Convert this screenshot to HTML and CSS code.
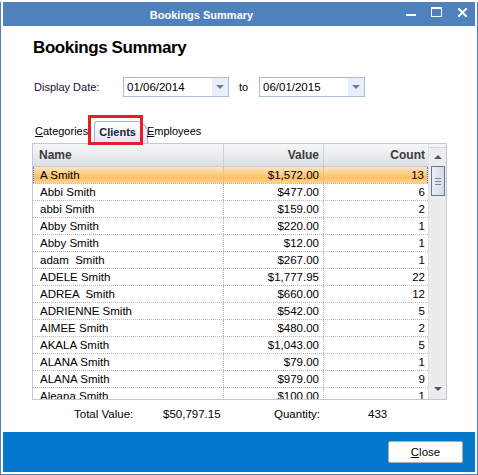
FILE: index.html
```html
<!DOCTYPE html>
<html lang="en">
<head>
  <meta charset="UTF-8" />
  <title>Bookings Summary</title>
  <link rel="stylesheet" href="styles.css">
</head>
<body>
  <div class="window">
    <div class="titlebar">
      <div class="title">Bookings Summary</div>
      <div class="win-controls">
        <span class="ctl-min"></span>
        <span class="ctl-max"></span>
        <svg class="ctl-close" width="9" height="9" viewBox="0 0 9 9">
          <path d="M1 1 L8 8 M8 1 L1 8" stroke="#fff" stroke-width="2" stroke-linecap="square" fill="none"/>
        </svg>
      </div>
    </div>

    <div class="content">
      <h1 class="heading">Bookings Summary</h1>

      <div class="date-row">
        <span class="date-label">Display Date:</span>
        <div class="date-box">
          <span class="date-value">01/06/2014</span>
          <span class="date-drop"><i class="tri-down"></i></span>
        </div>
        <span class="date-to">to</span>
        <div class="date-box">
          <span class="date-value">06/01/2015</span>
          <span class="date-drop"><i class="tri-down"></i></span>
        </div>
      </div>

      <div class="tabs">
        <span class="tab"><u>C</u>ategories</span>
        <span class="tab active">C<u>l</u>ients</span>
        <span class="tab next"><u>E</u>mployees</span>
        <div class="highlight-box"></div>
      </div>

      <div class="grid">
        <div class="grid-main">
          <div class="row head">
            <div class="cell name">Name</div>
            <div class="cell value">Value</div>
            <div class="cell count">Count</div>
          </div>
          <div class="rows">
            <div class="row selected"><div class="cell name">A Smith</div><div class="cell value">$1,572.00</div><div class="cell count">13</div></div>
            <div class="row"><div class="cell name">Abbi Smith</div><div class="cell value">$477.00</div><div class="cell count">6</div></div>
            <div class="row"><div class="cell name">abbi Smith</div><div class="cell value">$159.00</div><div class="cell count">2</div></div>
            <div class="row"><div class="cell name">Abby Smith</div><div class="cell value">$220.00</div><div class="cell count">1</div></div>
            <div class="row"><div class="cell name">Abby Smith</div><div class="cell value">$12.00</div><div class="cell count">1</div></div>
            <div class="row"><div class="cell name">adam  Smith</div><div class="cell value">$267.00</div><div class="cell count">1</div></div>
            <div class="row"><div class="cell name">ADELE Smith</div><div class="cell value">$1,777.95</div><div class="cell count">22</div></div>
            <div class="row"><div class="cell name">ADREA  Smith</div><div class="cell value">$660.00</div><div class="cell count">12</div></div>
            <div class="row"><div class="cell name">ADRIENNE Smith</div><div class="cell value">$542.00</div><div class="cell count">5</div></div>
            <div class="row"><div class="cell name">AIMEE Smith</div><div class="cell value">$480.00</div><div class="cell count">2</div></div>
            <div class="row"><div class="cell name">AKALA Smith</div><div class="cell value">$1,043.00</div><div class="cell count">5</div></div>
            <div class="row"><div class="cell name">ALANA Smith</div><div class="cell value">$79.00</div><div class="cell count">1</div></div>
            <div class="row"><div class="cell name">ALANA Smith</div><div class="cell value">$979.00</div><div class="cell count">9</div></div>
            <div class="row"><div class="cell name">Aleana Smith</div><div class="cell value">$100.00</div><div class="cell count">1</div></div>
          </div>
        </div>
        <div class="scrollbar">
          <div class="sb-cap"></div>
          <div class="sb-btn"><i class="tri-up"></i></div>
          <div class="sb-thumb"><span></span><span></span><span></span></div>
          <div class="sb-track"></div>
          <div class="sb-btn down"><i class="tri-down dark"></i></div>
        </div>
      </div>

      <div class="totals">
        <span class="t-label">Total Value:</span>
        <span class="t-value">$50,797.15</span>
        <span class="t-qlabel">Quantity:</span>
        <span class="t-qty">433</span>
      </div>
    </div>

    <div class="footer">
      <button class="btn-close"><u>C</u>lose</button>
    </div>
  </div>
</body>
</html>
```

FILE: styles.css
```css
* {
  box-sizing: border-box;
}

body {
  margin: 0;
  background: #fff;
  font-family: 'Liberation Sans', Arial, sans-serif;
  font-size: 11px;
  color: #000;
}

.window {
  margin-top: 2px;
  height: 473px;
  width: 478px;
  border: 1px solid #4f81bd;
  border-top: none;
  padding: 0 2px 2px 2px;
  display: flex;
  flex-direction: column;
}

/* title bar */
.titlebar {
  height: 24px;
  background: #4f81bd;
  display: flex;
  align-items: center;
  color: #fff;
}

.title {
  flex: 1;
  text-align: center;
  font-weight: bold;
  font-size: 11px;
  padding-top: 1px;
}

.win-controls {
  width: 75px;
  height: 24px;
  position: relative;
}

.ctl-min {
  position: absolute;
  left: 6px;
  top: 12px;
  width: 10px;
  height: 2px;
  background: #fff;
}

.ctl-max {
  position: absolute;
  left: 31px;
  top: 5px;
  width: 11px;
  height: 10px;
  border: 1px solid #fff;
  border-top-width: 2px;
}

.ctl-close {
  position: absolute;
  left: 58px;
  top: 6px;
}

/* content */
.content {
  flex: 1;
  display: flex;
  flex-direction: column;
  padding-left: 29px;
}

.heading {
  margin: 12px 0 0 1px;
  font-size: 17px;
  line-height: 20px;
  letter-spacing: -0.4px;
  font-weight: bold;
}

.date-row {
  margin-top: 19px;
  height: 20px;
  display: flex;
  align-items: center;
}

.date-label {
  width: 91px;
  padding-left: 2px;
  color: #1a1030;
}

.date-box {
  width: 106px;
  height: 20px;
  border: 1px solid #a9bbd6;
  display: flex;
  align-items: stretch;
  background: #fff;
}

.date-value {
  flex: 1;
  padding-left: 3px;
  line-height: 18px;
  font-size: 11.5px;
}

.date-drop {
  width: 16px;
  background: #e9eff8;
  display: flex;
  align-items: center;
  justify-content: center;
}

.tri-down {
  width: 0;
  height: 0;
  border-left: 4px solid transparent;
  border-right: 4px solid transparent;
  border-top: 4px solid #5c7db6;
}

.tri-down.dark {
  border-top-color: #4a5670;
}

.tri-up {
  width: 0;
  height: 0;
  border-left: 4px solid transparent;
  border-right: 4px solid transparent;
  border-bottom: 4px solid #4a5670;
}

.date-to {
  width: 30px;
  padding-left: 10px;
}

/* tabs */
.tabs {
  position: relative;
  margin-top: 24px;
  height: 22px;
  display: flex;
  align-items: flex-start;
  padding-left: 3px;
}

.tab {
  line-height: 14px;
  padding-top: 3px;
}

.tab.active {
  margin-left: 6px;
  height: 22px;
  padding: 3px 11px 0 4px;
  font-weight: bold;
  color: #1c2433;
  background: linear-gradient(#ffffff, #dce7f4);
  border: 1px solid #9fb5d4;
  border-bottom: none;
  border-radius: 3px 12px 0 0;
}

.tab.next {
  margin-left: -1px;
}

.highlight-box {
  position: absolute;
  left: 56px;
  top: -6px;
  width: 55px;
  height: 30px;
  border: 3px solid #ec1c24;
}

/* grid */
.grid {
  width: 415px;
  height: 257px;
  border: 1px solid #c3c9d2;
  display: flex;
}

.grid-main {
  width: 395px;
  overflow: hidden;
  display: flex;
  flex-direction: column;
}

.row {
  display: grid;
  grid-template-columns: 191px 100px 104px;
  height: 17px;
  border-bottom: 1px dotted #b8b8b8;
  font-size: 11.5px;
}

.row.head {
  height: 23px;
  border-bottom: 1px solid #c5c9d0;
  background: linear-gradient(#f6f7f8, #dcdfe3);
  font-weight: bold;
  font-size: 12px;
  color: #3c3c3c;
}

.rows {
  flex: 1;
  overflow: hidden;
}

.cell {
  line-height: 16px;
  white-space: pre;
  border-right: 1px dotted #b8b8b8;
}

.cell.count {
  border-right: none;
}

.head .cell {
  line-height: 22px;
  border-right: 1px solid #cdd1d7;
}

.head .cell.count {
  border-right: none;
}

.cell.name {
  padding-left: 7px;
}

.head .cell.name {
  padding-left: 6px;
}

.cell.value {
  text-align: right;
  padding-right: 4px;
}

.cell.count {
  text-align: right;
  padding-right: 3px;
}

.row.selected {
  background: linear-gradient(#fde6c2, #fbc062 65%, #fdd48e);
}

.row.selected .name {
  border-left: 1px dotted #3d7fd8;
  padding-left: 6px;
}

.row.selected .count {
  border-right: 1px dotted #3d7fd8;
}

/* scrollbar */
.scrollbar {
  width: 18px;
  background: #ececec;
  border-left: 1px solid #e0e0e0;
  display: flex;
  flex-direction: column;
  align-items: center;
}

.sb-cap {
  width: 100%;
  height: 4px;
  background: #f4f4f4;
  border-bottom: 1px solid #d2d6dc;
}

.sb-btn {
  height: 18px;
  display: flex;
  align-items: center;
  justify-content: center;
}

.sb-thumb {
  width: 14px;
  height: 30px;
  border: 1px solid #66789a;
  background: linear-gradient(to right, #e9edf4, #d4dbe7);
  display: flex;
  flex-direction: column;
  justify-content: center;
  align-items: center;
  gap: 2px;
}

.sb-thumb span {
  width: 6px;
  height: 1px;
  background: #7c8696;
}

.sb-track {
  flex: 1;
}

.sb-btn.down {
  height: 20px;
}

/* totals */
.totals {
  margin-top: 7px;
  display: flex;
  line-height: 14px;
  padding-left: 42px;
  font-size: 11.5px;
}

.t-label {
  width: 89px;
}

.t-value {
  width: 111px;
}

.t-qlabel {
  width: 94px;
}

/* footer */
.footer {
  height: 40px;
  background: #0479cc;
  display: flex;
  align-items: center;
  justify-content: flex-end;
  padding-right: 12px;
}

.btn-close {
  width: 75px;
  height: 22px;
  background: #fff;
  border: 1px solid #adadad;
  border-radius: 2px;
  font-family: 'Liberation Sans', Arial, sans-serif;
  font-size: 11.5px;
  color: #000;
  padding: 0;
}
```
